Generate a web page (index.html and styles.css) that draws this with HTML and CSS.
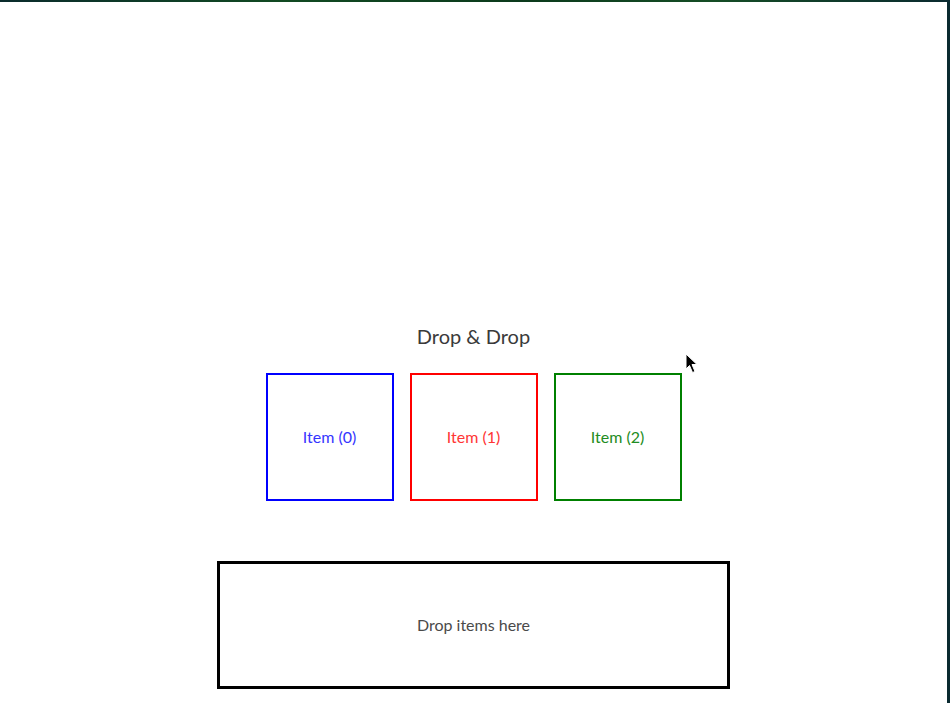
FILE: index.html
```html
<!DOCTYPE html>
<html>
<head>
<meta charset="utf-8">
<link rel="stylesheet" href="styles.css">
</head>
<body>
<div class="page">
  <h1 class="title">Drop &amp; Drop</h1>
  <div class="items">
    <div class="item item-blue">Item (0)</div>
    <div class="item item-red">Item (1)</div>
    <div class="item item-green">Item (2)</div>
  </div>
  <div class="dropzone">Drop items here</div>
  <svg class="cursor" width="14" height="22" viewBox="0 0 14 22">
    <path d="M1 1 L1 16 L4.5 12.5 L7.5 19.5 L10 18.5 L7 11.5 L12 11.5 Z" fill="#000" stroke="#fff" stroke-width="1"/>
  </svg>
</div>
</body>
</html>
```
FILE: styles.css
```css
html, body {
  margin: 0;
  height: 100%;
}
body {
  background: linear-gradient(90deg, #0a2b2c 0%, #114a22 30%, #0b3a1c 55%, #154d25 75%, #0a2a30 100%);
  padding: 2px 3px 0 0;
  box-sizing: border-box;
  overflow: hidden;
}
.page {
  position: relative;
  background: #fff;
  height: 100%;
  display: flex;
  flex-direction: column;
  align-items: center;
  padding-top: 322px;
  box-sizing: border-box;
  font-family: Lato, "Liberation Sans", sans-serif;
}
.title {
  margin: 0;
  font-size: 20px;
  font-weight: 400;
  line-height: 24px;
  color: #3a3a3a;
}
.items {
  display: flex;
  gap: 16px;
  margin-top: 25px;
}
.item {
  width: 128px;
  height: 128px;
  box-sizing: border-box;
  border: 2px solid;
  display: flex;
  align-items: center;
  justify-content: center;
  font-size: 16px;
  padding-bottom: 1px;
}
.item-blue { border-color: #0000ff; color: #3535ff; }
.item-red { border-color: #ff0000; color: #ff3535; }
.item-green { border-color: #008000; color: #228c22; }
.dropzone {
  margin-top: 60px;
  width: 513px;
  height: 128px;
  box-sizing: border-box;
  border: 3px solid #000;
  display: flex;
  align-items: center;
  justify-content: center;
  font-size: 16px;
  color: #4a4a4a;
  padding-bottom: 2px;
}
.cursor {
  position: absolute;
  left: 685px;
  top: 351px;
}
```
